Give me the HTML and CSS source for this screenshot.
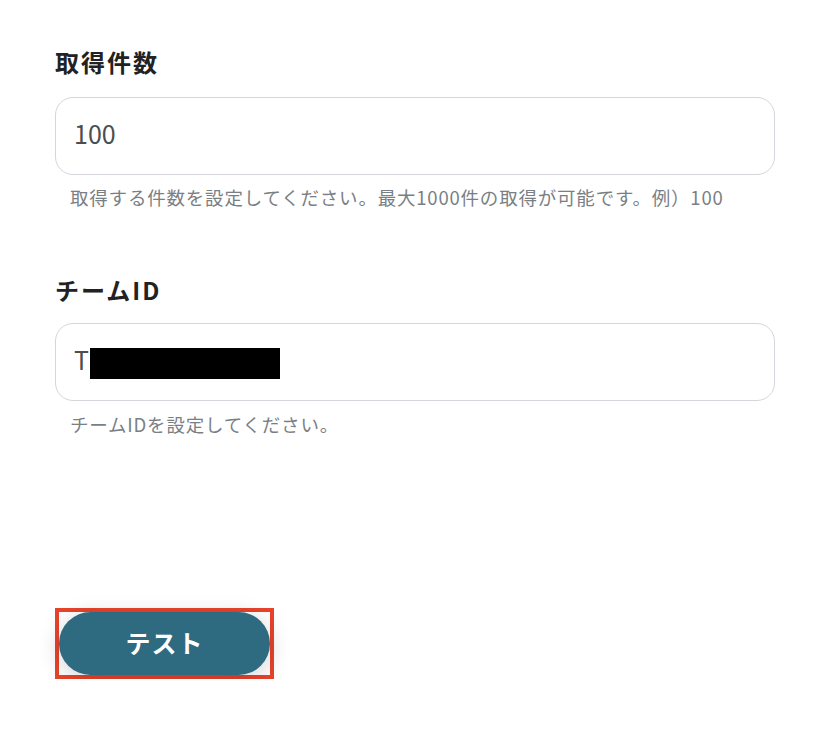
FILE: index.html
```html
<!DOCTYPE html>
<html lang="ja">
<head>
<meta charset="utf-8">
<link rel="stylesheet" href="styles.css">
</head>
<body>
<main class="form">
  <section class="field">
    <h2 class="label">取得件数</h2>
    <div class="input">100</div>
    <p class="help">取得する件数を設定してください。最大1000件の取得が可能です。例）100</p>
  </section>
  <section class="field field-second">
    <h2 class="label">チームID</h2>
    <div class="input">T<span class="redact"></span></div>
    <p class="help">チームIDを設定してください。</p>
  </section>
  <div class="actions">
    <div class="highlight">
      <button class="btn">テスト</button>
    </div>
  </div>
</main>
</body>
</html>
```

FILE: styles.css
```css
* { box-sizing: border-box; }
html, body { margin: 0; padding: 0; background: #ffffff; }
body {
  font-family: "Noto Sans CJK JP", "Noto Sans", sans-serif;
  color: #222;
}
.form {
  padding: 46px 0 0 55px;
  width: 775px;
}
.field { display: flex; flex-direction: column; }
.field-second { margin-top: 64px; }
.label {
  margin: 0;
  font-size: 24px;
  line-height: 32px;
  font-weight: 700;
  letter-spacing: 2px;
  color: #222;
}
.input {
  margin-top: 19px;
  height: 78px;
  border: 1px solid #d3d6db;
  border-radius: 18px;
  display: flex;
  align-items: center;
  padding: 0 0 6px 18px;
  font-size: 25px;
  color: #4d4d4d;
}
.field-second .input { margin-top: 17px; }
.redact {
  display: inline-block;
  width: 190px;
  height: 31px;
  background: #000;
  margin-left: 1px;
  margin-top: 8px;
}
.help {
  margin: 9px 0 0 15px;
  font-size: 18.5px;
  line-height: 26px;
  letter-spacing: 0.8px;
  color: #7a7f85;
}
.field-second .help { margin-top: 10px; }
.actions { margin-top: 171px; }
.highlight {
  display: inline-block;
  border: 4px solid #e8432b;
  line-height: 0;
}
.btn {
  width: 211px;
  height: 63px;
  border: none;
  border-radius: 32px;
  background: #2e6a80;
  color: #fff;
  font-family: "Noto Sans CJK JP", sans-serif;
  font-size: 25px;
  font-weight: 700;
  letter-spacing: 1px;
  box-shadow: 0 4px 22px rgba(0, 0, 0, 0.18);
  padding: 0 0 4px 0;
}
```
